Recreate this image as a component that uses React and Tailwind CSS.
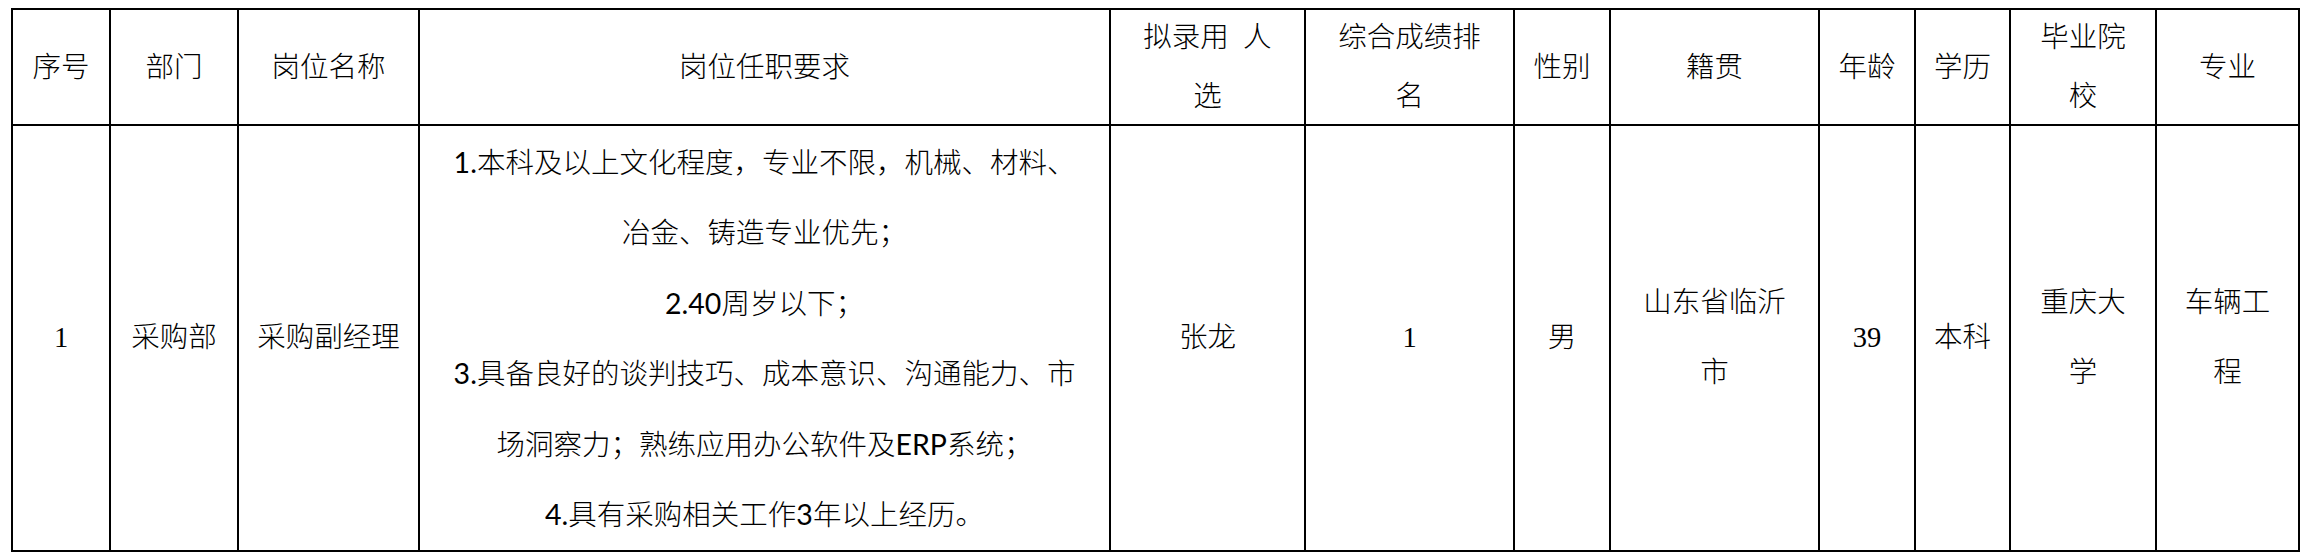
const serif = "font-['Liberation_Serif','Noto_Sans_CJK_SC',serif]";
const calibri = "font-['Lato','Noto_Sans_CJK_SC',sans-serif]";

const headers = [
  ["序号"],
  ["部门"],
  ["岗位名称"],
  ["岗位任职要求"],
  ["拟录用\u00a0 人", "选"],
  ["综合成绩排", "名"],
  ["性别"],
  ["籍贯"],
  ["年龄"],
  ["学历"],
  ["毕业院", "校"],
  ["专业"],
];

const requirements = [
  "1.本科及以上文化程度，专业不限，机械、材料、",
  "冶金、铸造专业优先；",
  "2.40周岁以下；",
  "3.具备良好的谈判技巧、成本意识、沟通能力、市",
  "场洞察力；熟练应用办公软件及ERP系统；",
  "4.具有采购相关工作3年以上经历。",
];

const row = [
  ["1"],
  ["采购部"],
  ["采购副经理"],
  null,
  ["张龙"],
  ["1"],
  ["男"],
  ["山东省临沂", "市"],
  ["39"],
  ["本科"],
  ["重庆大", "学"],
  ["车辆工", "程"],
];

// latin runs keep regular weight, chinese uses the light cut
const Line = ({ text }) => {
  const parts = text.split(/([0-9A-Za-z.]+)/).filter(Boolean);
  return (
    <div>
      {parts.map((p, i) =>
        /^[0-9A-Za-z.]+$/.test(p) ? (
          <span key={i} className="font-normal">
            {p}
          </span>
        ) : (
          <span key={i}>{p}</span>
        )
      )}
    </div>
  );
};

const Cell = ({ lines, leading, font }) => (
  <div
    className={`flex flex-col items-center justify-center border-r-2 border-b-2 border-black text-center whitespace-nowrap ${leading} ${font}`}>
    {lines.map((line, i) => (
      <Line key={i} text={line} />
    ))}
  </div>
);

export default function App() {
  return (
    <div className="w-[2309px] h-[557px] bg-white pt-2 pl-[11px] text-black text-[28.5px] font-light">
      <div className="grid w-fit grid-cols-[98px_128px_181px_691px_195px_209px_96px_209px_96px_95px_146px_143px] grid-rows-[116px_426px] border-t-2 border-l-2 border-black">
        {headers.map((lines, i) => (
          <Cell key={"h" + i} lines={lines} leading="leading-[59px]" font={serif} />
        ))}
        {row.map((lines, i) =>
          lines ? (
            <Cell key={"r" + i} lines={lines} leading="leading-[70px]" font={serif} />
          ) : (
            <Cell
              key={"r" + i}
              lines={requirements}
              leading="leading-[70.5px]"
              font={calibri}
            />
          )
        )}
      </div>
    </div>
  );
}
